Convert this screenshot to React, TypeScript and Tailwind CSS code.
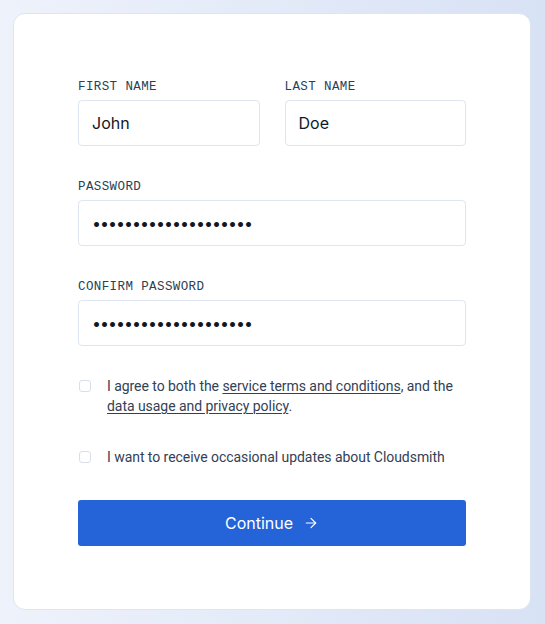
import { ArrowRight } from "lucide-react";

const labelCls =
  "block pt-[2px] text-[12.5px] leading-4 tracking-[0.4px] uppercase text-[#2a3f53] [font-family:'Liberation_Mono','DejaVu_Sans_Mono',monospace]";
const inputCls =
  "mt-[5px] h-[46px] w-full rounded-[4px] border border-[#dce5f0] bg-white px-[13px] text-[16px] text-[#111827] outline-none";

function Field({ label, value, type = "text" }: { label: string; value: string; type?: string }) {
  return (
    <div className="min-w-0 flex-1">
      <label className={labelCls}>{label}</label>
      <input
        className={`${inputCls} ${type === "password" ? "tracking-[-1px]" : ""}`}
        type={type}
        defaultValue={value}
        readOnly
      />
    </div>
  );
}

function Check({ children }: { children: React.ReactNode }) {
  return (
    <div className="flex items-start">
      <span className="mt-[4px] ml-[1px] h-[12px] w-[12px] shrink-0 rounded-[3px] border border-[#d6e0ec] bg-white" />
      <p className="ml-[16px] text-[14px] leading-5 tracking-[-0.05px] text-[#334155] [font-family:Roboto,'Liberation_Sans',sans-serif]">
        {children}
      </p>
    </div>
  );
}

export default function App() {
  return (
    <div className="min-h-[624px] w-full bg-gradient-to-r from-[#eef2fb] to-[#d8e2f5] p-[13px] pr-[14px] [font-family:Inter,'Liberation_Sans',sans-serif]">
      <div className="rounded-[12px] border border-[#dde5f1] bg-white px-[64px] pt-[63px] pb-[63px]">
        <div className="flex gap-[25px]">
          <Field label="First name" value="John" />
          <Field label="Last name" value="Doe" />
        </div>
        <div className="mt-[31px]">
          <Field label="Password" value="aaaaaaaaaaaaaaaaaaaa" type="password" />
        </div>
        <div className="mt-[31px]">
          <Field label="Confirm password" value="aaaaaaaaaaaaaaaaaaaa" type="password" />
        </div>

        <div className="mt-[30px]">
          <Check>
            I agree to both the{" "}
            <a className="underline underline-offset-2 decoration-1">service terms and conditions</a>, and the{" "}
            <a className="underline underline-offset-2 decoration-1">data usage and privacy policy</a>.
          </Check>
        </div>
        <div className="mt-[31px]">
          <Check>I want to receive occasional updates about Cloudsmith</Check>
        </div>

        <button className="mt-[33px] flex h-[46px] w-full items-center justify-center gap-[10px] rounded-[3px] bg-[#2563d9] text-[16px] text-white">
          Continue
          <ArrowRight className="h-4 w-4" strokeWidth={1.75} />
        </button>
      </div>
    </div>
  );
}
